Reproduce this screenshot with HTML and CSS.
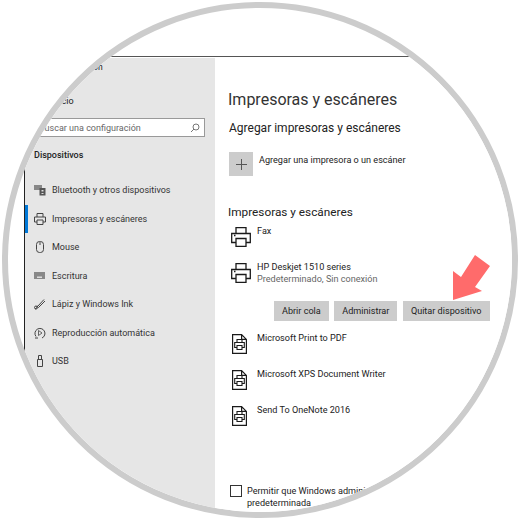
FILE: index.html
```html
<!DOCTYPE html>
<html lang="es">
<head>
  <meta charset="UTF-8">
  <meta name="viewport" content="width=device-width, initial-scale=1">
  <title>Impresoras y escáneres</title>
  <link rel="stylesheet" href="styles.css">
</head>
<body>

<svg class="defs" width="0" height="0">
  <symbol id="printer" viewBox="0 0 20 20">
    <path d="M5 6.500V.7h10v5.800M5 15.500H.7v-9h18.600v9H15M5 11.500h10v7.800H5zM3 8.500h1.500" fill="none" stroke="#1a1a1a" stroke-width="1.300"/>
  </symbol>
  <symbol id="docprinter" viewBox="0 0 15 20">
    <path d="M.6.600h9l4.800 4.800v14H.6zM9.600.600v4.800h4.800" fill="none" stroke="#1a1a1a" stroke-width="1.200"/>
    <path d="M5 8.500V5.500h5v3M5 13.500H2.700V8.500h9.600v5H10M5 11.500h5v4H5z" fill="none" stroke="#1a1a1a" stroke-width="1.100"/>
  </symbol>
</svg>

<div class="lens">
  <div class="window">
    <aside class="sidebar">
      <div class="crumb">Configuración</div>
      <div class="home">Inicio</div>
      <div class="search">
        <span>Buscar una configuración</span>
        <svg width="10" height="10" viewBox="0 0 10 10"><circle cx="6" cy="4" r="3" fill="none" stroke="#777"/><path d="M4 6L1 9" stroke="#777"/></svg>
      </div>
      <div class="section">Dispositivos</div>
      <nav class="nav">
        <div class="nav-item">
          <svg width="12" height="12" viewBox="0 0 12 12"><path d="M0 1h8v5H0z" fill="#888"/><path d="M5.500 4h6v7.500h-6z" fill="#555"/><path d="M7.500 6h2v1.500h-2zM7.500 9h2v1h-2z" fill="#ddd"/></svg>
          <span>Bluetooth y otros dispositivos</span>
        </div>
        <div class="nav-item active">
          <svg width="12" height="12" viewBox="0 0 12 12"><path d="M3 4V.5h6V4M3 9H.5V4h11v5H9M3 7h6v4.500H3z" fill="none" stroke="#444"/></svg>
          <span>Impresoras y escáneres</span>
        </div>
        <div class="nav-item">
          <svg width="12" height="12" viewBox="0 0 12 12"><rect x="2.500" y="0.500" width="7" height="11" rx="3" fill="none" stroke="#444"/><path d="M6 1v3" stroke="#444"/></svg>
          <span>Mouse</span>
        </div>
        <div class="nav-item">
          <svg width="12" height="12" viewBox="0 0 12 12"><path d="M0 2h11v7H0z" fill="#888"/><path d="M3 6.500h5V8H3z" fill="#ddd"/></svg>
          <span>Escritura</span>
        </div>
        <div class="nav-item">
          <svg width="12" height="12" viewBox="0 0 12 12"><path d="M1 11c2 0 1-3 3-3l6-6.500M3 8l1.500 1.500L11 3" fill="none" stroke="#444"/><circle cx="2" cy="9.500" r="1.500" fill="none" stroke="#444"/></svg>
          <span>Lápiz y Windows Ink</span>
        </div>
        <div class="nav-item">
          <svg width="12" height="12" viewBox="0 0 12 12"><path d="M2 9.500A5 5 0 1 1 8 11" fill="none" stroke="#444"/><path d="M4.500 3.500L8 6 4.500 8.500z" fill="none" stroke="#444" stroke-width=".8"/><path d="M1 11h3" stroke="#444"/></svg>
          <span>Reproducción automática</span>
        </div>
        <div class="nav-item">
          <svg width="12" height="12" viewBox="0 0 12 12"><path d="M3.500 4.500h5v7h-5zM4.500 4.500V.5h3v4" fill="none" stroke="#444"/></svg>
          <span>USB</span>
        </div>
      </nav>
    </aside>

    <main class="content">
      <h1>Impresoras y escáneres</h1>
      <h2>Agregar impresoras y escáneres</h2>
      <div class="add-row">
        <div class="add-btn">
          <svg width="11" height="11" viewBox="0 0 11 11"><path d="M5.500 0v11M0 5.500h11" stroke="#555"/></svg>
        </div>
        <span>Agregar una impresora o un escáner</span>
      </div>

      <h3>Impresoras y escáneres</h3>
      <div class="device">
        <svg class="dev-icon" width="20" height="20"><use href="#printer"/></svg>
        <div class="dev-text">Fax</div>
      </div>
      <div class="device selected">
        <svg class="dev-icon" width="20" height="20"><use href="#printer"/></svg>
        <div class="dev-text">HP Deskjet 1510 series<small>Predeterminado, Sin conexión</small></div>
      </div>
      <div class="actions">
        <button class="btn">Abrir cola</button>
        <button class="btn">Administrar</button>
        <button class="btn">Quitar dispositivo</button>
      </div>
      <div class="device doc">
        <svg class="dev-icon" width="15" height="20"><use href="#docprinter"/></svg>
        <div class="dev-text">Microsoft Print to PDF</div>
      </div>
      <div class="device doc">
        <svg class="dev-icon" width="15" height="20"><use href="#docprinter"/></svg>
        <div class="dev-text">Microsoft XPS Document Writer</div>
      </div>
      <div class="device doc">
        <svg class="dev-icon" width="15" height="20"><use href="#docprinter"/></svg>
        <div class="dev-text">Send To OneNote 2016</div>
      </div>

      <label class="check">
        <span class="box"></span>
        <span class="check-text">Permitir que Windows administre mi impresora<br>predeterminada</span>
      </label>
    </main>
  </div>

  <!-- callout arrow over the button -->
  <svg class="arrow" width="60" height="60" viewBox="0 0 60 60">
    <path d="M11 52V23L19 29 33 7 48 18 33 39 40 43z" fill="#ff6b6b"/>
  </svg>
</div>

</body>
</html>
```

FILE: styles.css
```css
html, body {
  margin: 0;
  padding: 0;
  background: white;
}
body {
  width: 520px;
  height: 520px;
  overflow: hidden;
  font-family: Roboto, Arial, sans-serif;
  color: #222;
}
.defs {
  position: absolute;
}
.lens {
  position: relative;
  box-sizing: border-box;
  width: 516px;
  height: 516px;
  margin: 2px;
  border: 6px solid #cccccc;
  border-radius: 50%;
  overflow: hidden;
  background: white;
  padding: 48px 0 0 16px;
}
.window {
  display: grid;
  grid-template-columns: 190px 1fr;
  height: 480px;
  width: 500px;
  border-top: 1px solid #555;
  border-left: 1px solid #222;
}
.sidebar {
  background: #e6e6e6;
  margin-top: 1px;
  padding-left: 8px;
  font-size: 9px;
}
.crumb {
  padding: 2px 0 0 17px;
  line-height: 14px;
  font-size: 8.500px;
}
.home {
  margin-top: 20px;
  padding-left: 19px;
  line-height: 14px;
}
.search {
  display: flex;
  justify-content: space-between;
  align-items: center;
  box-sizing: border-box;
  width: 172px;
  height: 19px;
  margin-top: 10px;
  padding: 0 4px 0 5px;
  background: white;
  border: 1px solid #999;
  color: #666;
}
.section {
  margin-top: 11px;
  padding-left: 1px;
  font-weight: 500;
  font-size: 9px;
  line-height: 14px;
}
.nav {
  margin: 14px 0 0 -8px;
}
.nav-item {
  display: flex;
  align-items: center;
  gap: 6px;
  height: 28.500px;
  padding-left: 6px;
  border-left: 3px solid transparent;
  color: #333;
}
.nav-item.active {
  border-left-color: #0078d7;
}
.content {
  padding: 0 0 0 13px;
  background: white;
}
h1 {
  margin: 32px 0 0;
  font-size: 16px;
  font-weight: 400;
  line-height: 22px;
  color: #333;
}
h2 {
  margin: 8px 0 0 1px;
  font-size: 12px;
  font-weight: 400;
  line-height: 18px;
}
.add-row {
  display: flex;
  gap: 6px;
  margin-top: 15px;
  font-size: 9.100px;
  line-height: 14px;
}
.add-row span {
  margin-top: 1px;
}
.add-btn {
  display: flex;
  align-items: center;
  justify-content: center;
  width: 24px;
  height: 24px;
  margin-left: 1px;
  background: #ccc;
}
h3 {
  margin: 28px 0 0;
  font-size: 11.800px;
  font-weight: 400;
  line-height: 16px;
}
.device {
  display: flex;
  gap: 6px;
  font-size: 9.100px;
  line-height: 12px;
  margin-top: 5px;
  height: 28px;
}
.device.selected {
  margin-top: 8px;
  height: 32px;
}
.device.doc {
  height: 25px;
  margin-top: 11px;
  gap: 10px;
}
.dev-icon {
  flex: none;
  margin: 2px 0 0 3px;
}
.device.doc .dev-icon {
  margin: 2px 0 0 4px;
}
.dev-text small {
  display: block;
  font-size: 9.100px;
  color: #666;
}
.actions {
  display: flex;
  gap: 5.500px;
  margin: 8px 0 0 46px;
}
.btn {
  height: 20px;
  padding: 0 8px;
  background: #ccc;
  border: none;
  font: inherit;
  font-size: 9.100px;
  color: #222;
}
.check {
  display: flex;
  gap: 5px;
  margin: 56px 0 0 2px;
  font-size: 9.100px;
  line-height: 11.500px;
}
.check-text {
  margin-top: 1px;
}
.box {
  flex: none;
  box-sizing: border-box;
  width: 12px;
  height: 12px;
  border: 1px solid #333;
}
.arrow {
  position: absolute;
  left: 434px;
  top: 240px;
}
```
